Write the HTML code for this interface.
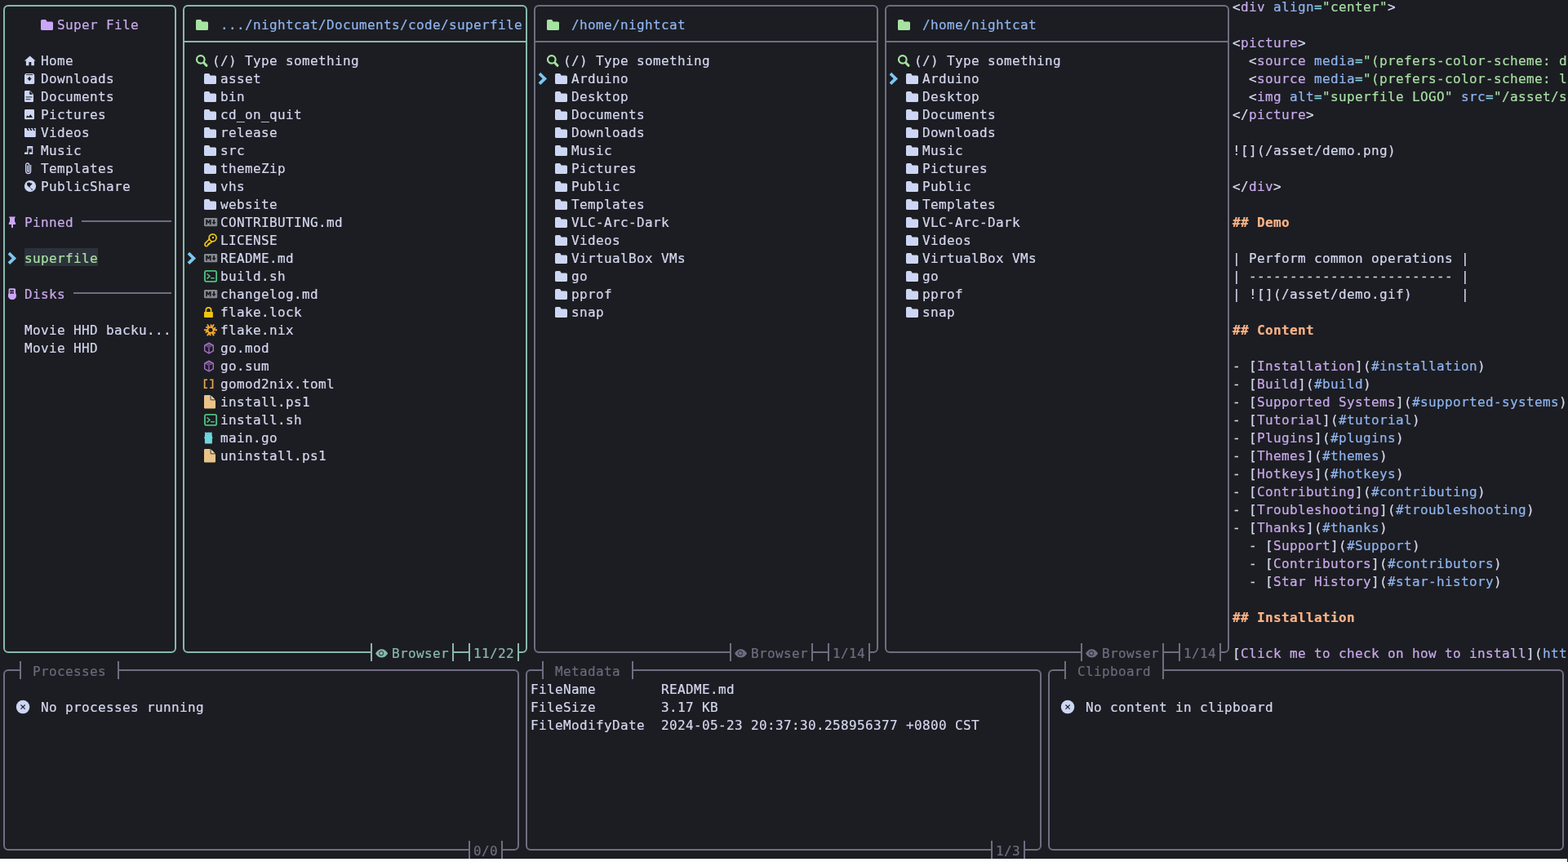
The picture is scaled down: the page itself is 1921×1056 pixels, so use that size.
<!DOCTYPE html>
<html lang="en">
<head>
<meta charset="utf-8">
<title>superfile</title>
<style>
html,body{margin:0;padding:0}
body{width:1921px;height:1056px;background:#1c1d22;overflow:hidden;position:relative}
#scr{position:absolute;left:0;top:0;width:1921px;height:1056px;overflow:hidden;background:#1c1d22;
font-family:"DejaVu Sans Mono","Liberation Mono",monospace;font-size:16px;letter-spacing:0.3672px;line-height:22px;color:#d3d6ee}
#wh{position:absolute;left:0;top:1052px;width:1920px;height:4px;background:#fff}
.t{position:absolute;white-space:pre;height:22px;margin:2.25px 0 0 0;-webkit-text-stroke:0.2px}
#tx{position:absolute;left:0;top:0;width:1921px;height:1056px;transform:translate(0px,-0.35px);will-change:transform}
.bx{position:absolute;box-sizing:border-box;border:2px solid;border-radius:6px}
.ln,.mk,.selbg,.ic{position:absolute}
.ic{overflow:visible}
.mk{background:#1c1d22}
.selbg{background:#2c323a}
.b-act{border-color:#88b8ab} .b-ina{border-color:#6f6d81}
.l-act{background:#88b8ab} .l-ina{background:#6f6d81} .l-div{background:#6f6d81}
.fg{color:#d3d6ee} .act{color:#88b8ab} .ina{color:#6f6d81} .dim{color:#696a7a}
.mauve{color:#c7a9ea} .blue{color:#8fb4ef} .green{color:#a8dfa3}
.peach{color:#fab387} .sky{color:#89dceb} .b{font-weight:bold}
</style>
</head>
<body>
<div id="scr">
<div class="bx b-act" style="left:4px;top:6px;width:212px;height:794px"></div>
<svg class="ic" style="left:50px;top:18px" width="20" height="22" viewBox="0 0 20 22"><path d="M0 7.6Q0 6 1.6 6H5.4Q6.2 6 6.7 6.7L7.6 8.4H13.4Q15 8.4 15 10V17.4Q15 19 13.4 19H1.6Q0 19 0 17.4Z" fill="#cba6f7"/></svg>
<svg class="ic" style="left:30px;top:62px" width="20" height="22" viewBox="0 0 20 22"><path d="M6.7 6.6L13.6 12.6H11.9V18.3H8.3V14H5.4V18.3H1.9V12.6H-0.1Z" fill="#cdd6f4"/></svg>
<svg class="ic" style="left:30px;top:84px" width="20" height="22" viewBox="0 0 20 22"><path d="M1.6 6H10.6L12.2 7.8V17.6Q12.2 19 10.8 19H1.4Q0 19 0 17.6V7.8Z" fill="#cdd6f4"/><path d="M2 7.5H10.2" stroke="#1c1d22" stroke-width="0.9" fill="none"/><path d="M5.1 10.2H7.1V11.8H9L6.1 15.2L3.2 11.8H5.1Z" fill="#1c1d22"/></svg>
<svg class="ic" style="left:30px;top:106px" width="20" height="22" viewBox="0 0 20 22"><path d="M1.3 5H6.6L11 9.4V17.7Q11 19 9.7 19H1.3Q0 19 0 17.7V6.3Q0 5 1.3 5Z" fill="#cdd6f4"/><path d="M6.2 5.6V9.8H10.4Z" fill="#1c1d22"/><path d="M1.6 12.9H9.4M1.6 15.6H7.4" stroke="#1c1d22" stroke-width="1.2" fill="none" opacity="0.75"/></svg>
<svg class="ic" style="left:30px;top:128px" width="20" height="22" viewBox="0 0 20 22"><rect x="0" y="6" width="12" height="12.3" rx="1.4" fill="#cdd6f4"/><path d="M1.8 16L3.7 13.3L5.2 14.9L7.3 12.1L10 16Z" fill="#1c1d22"/></svg>
<svg class="ic" style="left:30px;top:150px" width="20" height="22" viewBox="0 0 20 22"><path d="M0 7H13.8V16.9Q13.8 18 12.7 18H1.1Q0 18 0 16.9Z" fill="#cdd6f4"/><path d="M2.4 7L4 10H5.9L4.3 7ZM6 7L7.6 10H9.5L7.9 7ZM9.6 7L11.2 10H13.1L11.5 7Z" fill="#1c1d22"/></svg>
<svg class="ic" style="left:30px;top:172px" width="20" height="22" viewBox="0 0 20 22"><path d="M3.2 7H10.2V16.6Q10.2 17 9.8 17H6.4Q6 17 6 16.6V15Q6 14.6 6.4 14.6H8.9V10.6H4.5V16.6Q4.5 17 4.1 17H0.4Q0 17 0 16.6V15Q0 14.6 0.4 14.6H3.2Z" fill="#cdd6f4"/><path d="M4.5 9.5H8.9" stroke="#1c1d22" stroke-width="0.7" opacity="0.8"/></svg>
<svg class="ic" style="left:30px;top:194px" width="20" height="22" viewBox="0 0 20 22"><path d="M7.6 8.4V15.6A3 3 0 0 1 1.6 15.6V8A2 2 0 0 1 5.6 8V15.2A1 1 0 0 1 3.6 15.2V9" fill="none" stroke="#cdd6f4" stroke-width="1.3" stroke-linecap="round"/></svg>
<svg class="ic" style="left:30px;top:216px" width="20" height="22" viewBox="0 0 20 22"><circle cx="7" cy="12" r="7.1" fill="#cdd6f4"/><path d="M3 8.6L4.6 7.6L6.6 7.4L7.2 8.4L8.4 8.2L9.6 9L8.4 10.4L7.2 11.6L6.6 13L5.8 13.6L5 12.6L3.6 11.4L3 10Z" fill="#1c1d22"/><path d="M6.4 13.2L9.4 16.2" stroke="#1c1d22" stroke-width="0.7"/><path d="M8.6 16L10 15.4L9.8 16.6L8.8 17.2Z" fill="#1c1d22"/></svg>
<svg class="ic" style="left:10px;top:260px" width="20" height="22" viewBox="0 0 20 22"><path d="M1.2 5.4H8.8V6.8H8V11.6Q8.9 12.4 9.1 13.4V15H6V18.6L5 19.4L4 18.6V15H0.8V13.4Q1.1 12.4 2 11.6V6.8H1.2Z" fill="#cba6f7"/></svg>
<div class="ln l-div" style="left:100px;top:270px;width:110px;height:2px"></div>
<svg class="ic" style="left:10px;top:304px" width="20" height="22" viewBox="0 0 20 22"><path d="M0.9 6.1L7.4 12.4L0.9 18.7" fill="none" stroke="#7ac8f1" stroke-width="3.7" stroke-linejoin="miter" stroke-linecap="butt"/></svg>
<div class="selbg" style="left:30px;top:304px;width:90px;height:22px"></div>
<svg class="ic" style="left:10px;top:348px" width="20" height="22" viewBox="0 0 20 22"><path d="M2 5.2H7.6Q9.1 5.2 9.1 6.7V11.6Q9.9 11.8 9.9 12.8V15.2Q9.9 16.4 9 17.2L7.6 18.6Q7.2 19 6.6 19H3.4Q2.8 19 2.4 18.6L1 17.2Q0 16.4 0 15.2V12.8Q0 11.8 0.6 11.6V6.7Q0.6 5.2 2 5.2Z" fill="#cba6f7"/><rect x="2.1" y="7.3" width="4.8" height="4.4" fill="#1c1d22"/><rect x="2.7" y="8.8" width="1.3" height="1.5" fill="#cba6f7"/><rect x="5" y="8.8" width="1.3" height="1.5" fill="#cba6f7"/></svg>
<div class="ln l-div" style="left:90px;top:358px;width:120px;height:2px"></div>
<div class="bx b-act" style="left:224px;top:6px;width:422px;height:794px"></div>
<div class="ln l-act" style="left:225px;top:50px;width:420px;height:2px"></div>
<svg class="ic" style="left:240px;top:18px" width="20" height="22" viewBox="0 0 20 22"><path d="M0 7.6Q0 6 1.6 6H5.4Q6.2 6 6.7 6.7L7.6 8.4H13.4Q15 8.4 15 10V17.4Q15 19 13.4 19H1.6Q0 19 0 17.4Z" fill="#a6e3a1"/></svg>
<svg class="ic" style="left:240px;top:62px" width="20" height="22" viewBox="0 0 20 22"><circle cx="5.8" cy="10.9" r="4.8" fill="none" stroke="#a6e3a1" stroke-width="2.2"/><path d="M9.6 14.8L12.9 18.3" stroke="#a6e3a1" stroke-width="3.1" stroke-linecap="round"/></svg>
<svg class="ic" style="left:250px;top:84px" width="20" height="22" viewBox="0 0 20 22"><path d="M0 7.6Q0 6 1.6 6H5.4Q6.2 6 6.7 6.7L7.6 8.4H13.4Q15 8.4 15 10V17.4Q15 19 13.4 19H1.6Q0 19 0 17.4Z" fill="#cdd6f4"/></svg>
<svg class="ic" style="left:250px;top:106px" width="20" height="22" viewBox="0 0 20 22"><path d="M0 7.6Q0 6 1.6 6H5.4Q6.2 6 6.7 6.7L7.6 8.4H13.4Q15 8.4 15 10V17.4Q15 19 13.4 19H1.6Q0 19 0 17.4Z" fill="#cdd6f4"/></svg>
<svg class="ic" style="left:250px;top:128px" width="20" height="22" viewBox="0 0 20 22"><path d="M0 7.6Q0 6 1.6 6H5.4Q6.2 6 6.7 6.7L7.6 8.4H13.4Q15 8.4 15 10V17.4Q15 19 13.4 19H1.6Q0 19 0 17.4Z" fill="#cdd6f4"/></svg>
<svg class="ic" style="left:250px;top:150px" width="20" height="22" viewBox="0 0 20 22"><path d="M0 7.6Q0 6 1.6 6H5.4Q6.2 6 6.7 6.7L7.6 8.4H13.4Q15 8.4 15 10V17.4Q15 19 13.4 19H1.6Q0 19 0 17.4Z" fill="#cdd6f4"/></svg>
<svg class="ic" style="left:250px;top:172px" width="20" height="22" viewBox="0 0 20 22"><path d="M0 7.6Q0 6 1.6 6H5.4Q6.2 6 6.7 6.7L7.6 8.4H13.4Q15 8.4 15 10V17.4Q15 19 13.4 19H1.6Q0 19 0 17.4Z" fill="#cdd6f4"/></svg>
<svg class="ic" style="left:250px;top:194px" width="20" height="22" viewBox="0 0 20 22"><path d="M0 7.6Q0 6 1.6 6H5.4Q6.2 6 6.7 6.7L7.6 8.4H13.4Q15 8.4 15 10V17.4Q15 19 13.4 19H1.6Q0 19 0 17.4Z" fill="#cdd6f4"/></svg>
<svg class="ic" style="left:250px;top:216px" width="20" height="22" viewBox="0 0 20 22"><path d="M0 7.6Q0 6 1.6 6H5.4Q6.2 6 6.7 6.7L7.6 8.4H13.4Q15 8.4 15 10V17.4Q15 19 13.4 19H1.6Q0 19 0 17.4Z" fill="#cdd6f4"/></svg>
<svg class="ic" style="left:250px;top:238px" width="20" height="22" viewBox="0 0 20 22"><path d="M0 7.6Q0 6 1.6 6H5.4Q6.2 6 6.7 6.7L7.6 8.4H13.4Q15 8.4 15 10V17.4Q15 19 13.4 19H1.6Q0 19 0 17.4Z" fill="#cdd6f4"/></svg>
<svg class="ic" style="left:250px;top:260px" width="20" height="22" viewBox="0 0 20 22"><rect x="0" y="7" width="16.2" height="10.2" rx="1.2" fill="#84898f"/><path d="M2.2 15.2V9H4L5.4 11.2L6.8 9H8.6V15.2H6.9V11.9L5.4 14L3.9 11.9V15.2Z" fill="#1c1d22"/><path d="M11.2 9H13V12H14.7L12.1 15.3L9.5 12H11.2Z" fill="#1c1d22"/></svg>
<svg class="ic" style="left:250px;top:282px" width="20" height="22" viewBox="0 0 20 22"><circle cx="10.6" cy="9.3" r="4.5" fill="none" stroke="#f1c40f" stroke-width="1.7"/><circle cx="11" cy="9" r="1.2" fill="#f1c40f"/><path d="M6.7 10.7L1.5 15.9Q0.5 17.6 1.5 19.1Q2.8 20.1 4.1 19.1L5 18.2V17.1H6.3V15.9H7.7L9.4 14.1" fill="none" stroke="#f1c40f" stroke-width="1.7" stroke-linejoin="round" stroke-linecap="round"/></svg>
<svg class="ic" style="left:230px;top:304px" width="20" height="22" viewBox="0 0 20 22"><path d="M0.9 6.1L7.4 12.4L0.9 18.7" fill="none" stroke="#7ac8f1" stroke-width="3.7" stroke-linejoin="miter" stroke-linecap="butt"/></svg>
<svg class="ic" style="left:250px;top:304px" width="20" height="22" viewBox="0 0 20 22"><rect x="0" y="7" width="16.2" height="10.2" rx="1.2" fill="#84898f"/><path d="M2.2 15.2V9H4L5.4 11.2L6.8 9H8.6V15.2H6.9V11.9L5.4 14L3.9 11.9V15.2Z" fill="#1c1d22"/><path d="M11.2 9H13V12H14.7L12.1 15.3L9.5 12H11.2Z" fill="#1c1d22"/></svg>
<svg class="ic" style="left:250px;top:326px" width="20" height="22" viewBox="0 0 20 22"><rect x="0.95" y="5.9" width="14.2" height="13" rx="2" fill="none" stroke="#4fbd7e" stroke-width="1.9"/><path d="M3.9 9.7L7 12.4L3.9 15.1" fill="none" stroke="#4fbd7e" stroke-width="1.5" stroke-linecap="round" stroke-linejoin="round"/><path d="M8.6 14.7H12.2" stroke="#4fbd7e" stroke-width="1.5" stroke-linecap="round"/></svg>
<svg class="ic" style="left:250px;top:348px" width="20" height="22" viewBox="0 0 20 22"><rect x="0" y="7" width="16.2" height="10.2" rx="1.2" fill="#84898f"/><path d="M2.2 15.2V9H4L5.4 11.2L6.8 9H8.6V15.2H6.9V11.9L5.4 14L3.9 11.9V15.2Z" fill="#1c1d22"/><path d="M11.2 9H13V12H14.7L12.1 15.3L9.5 12H11.2Z" fill="#1c1d22"/></svg>
<svg class="ic" style="left:250px;top:370px" width="20" height="22" viewBox="0 0 20 22"><rect x="0" y="12" width="10.9" height="7" rx="0.9" fill="#f0c416"/><path d="M2.3 12.4V10.1A3.15 3.15 0 0 1 8.6 10.1V12.4" fill="none" stroke="#f0c416" stroke-width="1.7"/></svg>
<svg class="ic" style="left:250px;top:392px" width="20" height="22" viewBox="0 0 20 22"><g transform="rotate(0 8 12.3)"><path d="M8 12.3L16 12.3M11.7 12.3L13.9 8.9M12 12.3L9.7 8.4" stroke="#f0a830" stroke-width="1.9" fill="none"/></g><g transform="rotate(60 8 12.3)"><path d="M8 12.3L16 12.3M11.7 12.3L13.9 8.9M12 12.3L9.7 8.4" stroke="#f0a830" stroke-width="1.9" fill="none"/></g><g transform="rotate(120 8 12.3)"><path d="M8 12.3L16 12.3M11.7 12.3L13.9 8.9M12 12.3L9.7 8.4" stroke="#f0a830" stroke-width="1.9" fill="none"/></g><g transform="rotate(180 8 12.3)"><path d="M8 12.3L16 12.3M11.7 12.3L13.9 8.9M12 12.3L9.7 8.4" stroke="#f0a830" stroke-width="1.9" fill="none"/></g><g transform="rotate(240 8 12.3)"><path d="M8 12.3L16 12.3M11.7 12.3L13.9 8.9M12 12.3L9.7 8.4" stroke="#f0a830" stroke-width="1.9" fill="none"/></g><g transform="rotate(300 8 12.3)"><path d="M8 12.3L16 12.3M11.7 12.3L13.9 8.9M12 12.3L9.7 8.4" stroke="#f0a830" stroke-width="1.9" fill="none"/></g><circle cx="8" cy="12.3" r="2.5" fill="#1c1d22"/></svg>
<svg class="ic" style="left:250px;top:414px" width="20" height="22" viewBox="0 0 20 22"><path d="M6 6.2L11.3 9.2V15.8L6 18.8L0.7 15.8V9.2Z" fill="none" stroke="#a56ec8" stroke-width="1.4" stroke-linejoin="round"/><path d="M6 6.2L11.3 9.2L6 12.3L0.7 9.2Z" fill="#a56ec8" opacity="0.8"/><path d="M6 12.3V18.8" stroke="#a56ec8" stroke-width="1.3"/><path d="M3 8.9L7.1 11.1M5.2 7.8L9.2 10" stroke="#1c1d22" stroke-width="0.9" opacity="0.85"/></svg>
<svg class="ic" style="left:250px;top:436px" width="20" height="22" viewBox="0 0 20 22"><path d="M6 6.2L11.3 9.2V15.8L6 18.8L0.7 15.8V9.2Z" fill="none" stroke="#a56ec8" stroke-width="1.4" stroke-linejoin="round"/><path d="M6 6.2L11.3 9.2L6 12.3L0.7 9.2Z" fill="#a56ec8" opacity="0.8"/><path d="M6 12.3V18.8" stroke="#a56ec8" stroke-width="1.3"/><path d="M3 8.9L7.1 11.1M5.2 7.8L9.2 10" stroke="#1c1d22" stroke-width="0.9" opacity="0.85"/></svg>
<svg class="ic" style="left:250px;top:458px" width="20" height="22" viewBox="0 0 20 22"><path d="M4 6.4H-0.2V18H4V16.5H1.5V7.9H4ZM7.2 6.4H11.4V18H7.2V16.5H9.7V7.9H7.2Z" fill="#e6a650"/></svg>
<svg class="ic" style="left:250px;top:480px" width="20" height="22" viewBox="0 0 20 22"><path d="M1.2 4H8L14 10V19.3Q14 20.5 12.8 20.5H1.2Q0 20.5 0 19.3V5.2Q0 4 1.2 4Z" fill="#e8c489"/><path d="M8.2 3.6V9.8H14.4" fill="none" stroke="#1c1d22" stroke-width="1"/><path d="M8.7 4.8V9.3H13.2Z" fill="#e3d3ae"/></svg>
<svg class="ic" style="left:250px;top:502px" width="20" height="22" viewBox="0 0 20 22"><rect x="0.95" y="5.9" width="14.2" height="13" rx="2" fill="none" stroke="#4fbd7e" stroke-width="1.9"/><path d="M3.9 9.7L7 12.4L3.9 15.1" fill="none" stroke="#4fbd7e" stroke-width="1.5" stroke-linecap="round" stroke-linejoin="round"/><path d="M8.6 14.7H12.2" stroke="#4fbd7e" stroke-width="1.5" stroke-linecap="round"/></svg>
<svg class="ic" style="left:250px;top:524px" width="20" height="22" viewBox="0 0 20 22"><path d="M1.6 5.6Q2.6 5.2 3.2 6Q5.3 5 7.4 6Q8 5.2 9 5.6Q10.2 6.4 9.4 7.6Q10 9.4 9.9 11.6Q10.9 12 10.4 12.9Q10.2 13.2 9.9 13.1V18.4Q9.9 19.6 8.6 19.6H2.2Q0.9 19.6 0.9 18.4V13.1Q0.4 13.2 0.2 12.9Q-0.2 12 0.8 11.6Q0.7 9.4 1.2 7.6Q0.4 6.4 1.6 5.6Z" fill="#6ed6de"/><path d="M2.6 7.4Q4.4 8.6 6.6 7.4" stroke="#3fa9c0" stroke-width="0.6" fill="none" opacity="0.7"/></svg>
<svg class="ic" style="left:250px;top:546px" width="20" height="22" viewBox="0 0 20 22"><path d="M1.2 4H8L14 10V19.3Q14 20.5 12.8 20.5H1.2Q0 20.5 0 19.3V5.2Q0 4 1.2 4Z" fill="#e8c489"/><path d="M8.2 3.6V9.8H14.4" fill="none" stroke="#1c1d22" stroke-width="1"/><path d="M8.7 4.8V9.3H13.2Z" fill="#e3d3ae"/></svg>
<div class="mk" style="left:456px;top:788px;width:98px;height:22px"></div>
<div class="mk" style="left:576px;top:788px;width:58px;height:22px"></div>
<div class="ln l-act" style="left:454px;top:788px;width:2px;height:22px"></div>
<div class="ln l-act" style="left:554px;top:788px;width:2px;height:22px"></div>
<div class="ln l-act" style="left:574px;top:788px;width:2px;height:22px"></div>
<div class="ln l-act" style="left:634px;top:788px;width:2px;height:22px"></div>
<svg class="ic" style="left:460px;top:788px" width="20" height="22" viewBox="0 0 20 22"><path d="M0 12.4Q3.4 7.2 7.6 7.2T15.2 12.4Q11.8 17.6 7.6 17.6T0 12.4Z" fill="#88b8ab"/><circle cx="7.1" cy="12.3" r="2.6" fill="none" stroke="#1c1d22" stroke-width="0.9"/></svg>
<div class="bx b-ina" style="left:654px;top:6px;width:422px;height:794px"></div>
<div class="ln l-ina" style="left:655px;top:50px;width:420px;height:2px"></div>
<svg class="ic" style="left:670px;top:18px" width="20" height="22" viewBox="0 0 20 22"><path d="M0 7.6Q0 6 1.6 6H5.4Q6.2 6 6.7 6.7L7.6 8.4H13.4Q15 8.4 15 10V17.4Q15 19 13.4 19H1.6Q0 19 0 17.4Z" fill="#a6e3a1"/></svg>
<svg class="ic" style="left:670px;top:62px" width="20" height="22" viewBox="0 0 20 22"><circle cx="5.8" cy="10.9" r="4.8" fill="none" stroke="#a6e3a1" stroke-width="2.2"/><path d="M9.6 14.8L12.9 18.3" stroke="#a6e3a1" stroke-width="3.1" stroke-linecap="round"/></svg>
<svg class="ic" style="left:660px;top:84px" width="20" height="22" viewBox="0 0 20 22"><path d="M0.9 6.1L7.4 12.4L0.9 18.7" fill="none" stroke="#7ac8f1" stroke-width="3.7" stroke-linejoin="miter" stroke-linecap="butt"/></svg>
<svg class="ic" style="left:680px;top:84px" width="20" height="22" viewBox="0 0 20 22"><path d="M0 7.6Q0 6 1.6 6H5.4Q6.2 6 6.7 6.7L7.6 8.4H13.4Q15 8.4 15 10V17.4Q15 19 13.4 19H1.6Q0 19 0 17.4Z" fill="#cdd6f4"/></svg>
<svg class="ic" style="left:680px;top:106px" width="20" height="22" viewBox="0 0 20 22"><path d="M0 7.6Q0 6 1.6 6H5.4Q6.2 6 6.7 6.7L7.6 8.4H13.4Q15 8.4 15 10V17.4Q15 19 13.4 19H1.6Q0 19 0 17.4Z" fill="#cdd6f4"/></svg>
<svg class="ic" style="left:680px;top:128px" width="20" height="22" viewBox="0 0 20 22"><path d="M0 7.6Q0 6 1.6 6H5.4Q6.2 6 6.7 6.7L7.6 8.4H13.4Q15 8.4 15 10V17.4Q15 19 13.4 19H1.6Q0 19 0 17.4Z" fill="#cdd6f4"/></svg>
<svg class="ic" style="left:680px;top:150px" width="20" height="22" viewBox="0 0 20 22"><path d="M0 7.6Q0 6 1.6 6H5.4Q6.2 6 6.7 6.7L7.6 8.4H13.4Q15 8.4 15 10V17.4Q15 19 13.4 19H1.6Q0 19 0 17.4Z" fill="#cdd6f4"/></svg>
<svg class="ic" style="left:680px;top:172px" width="20" height="22" viewBox="0 0 20 22"><path d="M0 7.6Q0 6 1.6 6H5.4Q6.2 6 6.7 6.7L7.6 8.4H13.4Q15 8.4 15 10V17.4Q15 19 13.4 19H1.6Q0 19 0 17.4Z" fill="#cdd6f4"/></svg>
<svg class="ic" style="left:680px;top:194px" width="20" height="22" viewBox="0 0 20 22"><path d="M0 7.6Q0 6 1.6 6H5.4Q6.2 6 6.7 6.7L7.6 8.4H13.4Q15 8.4 15 10V17.4Q15 19 13.4 19H1.6Q0 19 0 17.4Z" fill="#cdd6f4"/></svg>
<svg class="ic" style="left:680px;top:216px" width="20" height="22" viewBox="0 0 20 22"><path d="M0 7.6Q0 6 1.6 6H5.4Q6.2 6 6.7 6.7L7.6 8.4H13.4Q15 8.4 15 10V17.4Q15 19 13.4 19H1.6Q0 19 0 17.4Z" fill="#cdd6f4"/></svg>
<svg class="ic" style="left:680px;top:238px" width="20" height="22" viewBox="0 0 20 22"><path d="M0 7.6Q0 6 1.6 6H5.4Q6.2 6 6.7 6.7L7.6 8.4H13.4Q15 8.4 15 10V17.4Q15 19 13.4 19H1.6Q0 19 0 17.4Z" fill="#cdd6f4"/></svg>
<svg class="ic" style="left:680px;top:260px" width="20" height="22" viewBox="0 0 20 22"><path d="M0 7.6Q0 6 1.6 6H5.4Q6.2 6 6.7 6.7L7.6 8.4H13.4Q15 8.4 15 10V17.4Q15 19 13.4 19H1.6Q0 19 0 17.4Z" fill="#cdd6f4"/></svg>
<svg class="ic" style="left:680px;top:282px" width="20" height="22" viewBox="0 0 20 22"><path d="M0 7.6Q0 6 1.6 6H5.4Q6.2 6 6.7 6.7L7.6 8.4H13.4Q15 8.4 15 10V17.4Q15 19 13.4 19H1.6Q0 19 0 17.4Z" fill="#cdd6f4"/></svg>
<svg class="ic" style="left:680px;top:304px" width="20" height="22" viewBox="0 0 20 22"><path d="M0 7.6Q0 6 1.6 6H5.4Q6.2 6 6.7 6.7L7.6 8.4H13.4Q15 8.4 15 10V17.4Q15 19 13.4 19H1.6Q0 19 0 17.4Z" fill="#cdd6f4"/></svg>
<svg class="ic" style="left:680px;top:326px" width="20" height="22" viewBox="0 0 20 22"><path d="M0 7.6Q0 6 1.6 6H5.4Q6.2 6 6.7 6.7L7.6 8.4H13.4Q15 8.4 15 10V17.4Q15 19 13.4 19H1.6Q0 19 0 17.4Z" fill="#cdd6f4"/></svg>
<svg class="ic" style="left:680px;top:348px" width="20" height="22" viewBox="0 0 20 22"><path d="M0 7.6Q0 6 1.6 6H5.4Q6.2 6 6.7 6.7L7.6 8.4H13.4Q15 8.4 15 10V17.4Q15 19 13.4 19H1.6Q0 19 0 17.4Z" fill="#cdd6f4"/></svg>
<svg class="ic" style="left:680px;top:370px" width="20" height="22" viewBox="0 0 20 22"><path d="M0 7.6Q0 6 1.6 6H5.4Q6.2 6 6.7 6.7L7.6 8.4H13.4Q15 8.4 15 10V17.4Q15 19 13.4 19H1.6Q0 19 0 17.4Z" fill="#cdd6f4"/></svg>
<div class="mk" style="left:896px;top:788px;width:98px;height:22px"></div>
<div class="mk" style="left:1016px;top:788px;width:48px;height:22px"></div>
<div class="ln l-ina" style="left:894px;top:788px;width:2px;height:22px"></div>
<div class="ln l-ina" style="left:994px;top:788px;width:2px;height:22px"></div>
<div class="ln l-ina" style="left:1014px;top:788px;width:2px;height:22px"></div>
<div class="ln l-ina" style="left:1064px;top:788px;width:2px;height:22px"></div>
<svg class="ic" style="left:900px;top:788px" width="20" height="22" viewBox="0 0 20 22"><path d="M0 12.4Q3.4 7.2 7.6 7.2T15.2 12.4Q11.8 17.6 7.6 17.6T0 12.4Z" fill="#6f6d81"/><circle cx="7.1" cy="12.3" r="2.6" fill="none" stroke="#1c1d22" stroke-width="0.9"/></svg>
<div class="bx b-ina" style="left:1084px;top:6px;width:422px;height:794px"></div>
<div class="ln l-ina" style="left:1085px;top:50px;width:420px;height:2px"></div>
<svg class="ic" style="left:1100px;top:18px" width="20" height="22" viewBox="0 0 20 22"><path d="M0 7.6Q0 6 1.6 6H5.4Q6.2 6 6.7 6.7L7.6 8.4H13.4Q15 8.4 15 10V17.4Q15 19 13.4 19H1.6Q0 19 0 17.4Z" fill="#a6e3a1"/></svg>
<svg class="ic" style="left:1100px;top:62px" width="20" height="22" viewBox="0 0 20 22"><circle cx="5.8" cy="10.9" r="4.8" fill="none" stroke="#a6e3a1" stroke-width="2.2"/><path d="M9.6 14.8L12.9 18.3" stroke="#a6e3a1" stroke-width="3.1" stroke-linecap="round"/></svg>
<svg class="ic" style="left:1090px;top:84px" width="20" height="22" viewBox="0 0 20 22"><path d="M0.9 6.1L7.4 12.4L0.9 18.7" fill="none" stroke="#7ac8f1" stroke-width="3.7" stroke-linejoin="miter" stroke-linecap="butt"/></svg>
<svg class="ic" style="left:1110px;top:84px" width="20" height="22" viewBox="0 0 20 22"><path d="M0 7.6Q0 6 1.6 6H5.4Q6.2 6 6.7 6.7L7.6 8.4H13.4Q15 8.4 15 10V17.4Q15 19 13.4 19H1.6Q0 19 0 17.4Z" fill="#cdd6f4"/></svg>
<svg class="ic" style="left:1110px;top:106px" width="20" height="22" viewBox="0 0 20 22"><path d="M0 7.6Q0 6 1.6 6H5.4Q6.2 6 6.7 6.7L7.6 8.4H13.4Q15 8.4 15 10V17.4Q15 19 13.4 19H1.6Q0 19 0 17.4Z" fill="#cdd6f4"/></svg>
<svg class="ic" style="left:1110px;top:128px" width="20" height="22" viewBox="0 0 20 22"><path d="M0 7.6Q0 6 1.6 6H5.4Q6.2 6 6.7 6.7L7.6 8.4H13.4Q15 8.4 15 10V17.4Q15 19 13.4 19H1.6Q0 19 0 17.4Z" fill="#cdd6f4"/></svg>
<svg class="ic" style="left:1110px;top:150px" width="20" height="22" viewBox="0 0 20 22"><path d="M0 7.6Q0 6 1.6 6H5.4Q6.2 6 6.7 6.7L7.6 8.4H13.4Q15 8.4 15 10V17.4Q15 19 13.4 19H1.6Q0 19 0 17.4Z" fill="#cdd6f4"/></svg>
<svg class="ic" style="left:1110px;top:172px" width="20" height="22" viewBox="0 0 20 22"><path d="M0 7.6Q0 6 1.6 6H5.4Q6.2 6 6.7 6.7L7.6 8.4H13.4Q15 8.4 15 10V17.4Q15 19 13.4 19H1.6Q0 19 0 17.4Z" fill="#cdd6f4"/></svg>
<svg class="ic" style="left:1110px;top:194px" width="20" height="22" viewBox="0 0 20 22"><path d="M0 7.6Q0 6 1.6 6H5.4Q6.2 6 6.7 6.7L7.6 8.4H13.4Q15 8.4 15 10V17.4Q15 19 13.4 19H1.6Q0 19 0 17.4Z" fill="#cdd6f4"/></svg>
<svg class="ic" style="left:1110px;top:216px" width="20" height="22" viewBox="0 0 20 22"><path d="M0 7.6Q0 6 1.6 6H5.4Q6.2 6 6.7 6.7L7.6 8.4H13.4Q15 8.4 15 10V17.4Q15 19 13.4 19H1.6Q0 19 0 17.4Z" fill="#cdd6f4"/></svg>
<svg class="ic" style="left:1110px;top:238px" width="20" height="22" viewBox="0 0 20 22"><path d="M0 7.6Q0 6 1.6 6H5.4Q6.2 6 6.7 6.7L7.6 8.4H13.4Q15 8.4 15 10V17.4Q15 19 13.4 19H1.6Q0 19 0 17.4Z" fill="#cdd6f4"/></svg>
<svg class="ic" style="left:1110px;top:260px" width="20" height="22" viewBox="0 0 20 22"><path d="M0 7.6Q0 6 1.6 6H5.4Q6.2 6 6.7 6.7L7.6 8.4H13.4Q15 8.4 15 10V17.4Q15 19 13.4 19H1.6Q0 19 0 17.4Z" fill="#cdd6f4"/></svg>
<svg class="ic" style="left:1110px;top:282px" width="20" height="22" viewBox="0 0 20 22"><path d="M0 7.6Q0 6 1.6 6H5.4Q6.2 6 6.7 6.7L7.6 8.4H13.4Q15 8.4 15 10V17.4Q15 19 13.4 19H1.6Q0 19 0 17.4Z" fill="#cdd6f4"/></svg>
<svg class="ic" style="left:1110px;top:304px" width="20" height="22" viewBox="0 0 20 22"><path d="M0 7.6Q0 6 1.6 6H5.4Q6.2 6 6.7 6.7L7.6 8.4H13.4Q15 8.4 15 10V17.4Q15 19 13.4 19H1.6Q0 19 0 17.4Z" fill="#cdd6f4"/></svg>
<svg class="ic" style="left:1110px;top:326px" width="20" height="22" viewBox="0 0 20 22"><path d="M0 7.6Q0 6 1.6 6H5.4Q6.2 6 6.7 6.7L7.6 8.4H13.4Q15 8.4 15 10V17.4Q15 19 13.4 19H1.6Q0 19 0 17.4Z" fill="#cdd6f4"/></svg>
<svg class="ic" style="left:1110px;top:348px" width="20" height="22" viewBox="0 0 20 22"><path d="M0 7.6Q0 6 1.6 6H5.4Q6.2 6 6.7 6.7L7.6 8.4H13.4Q15 8.4 15 10V17.4Q15 19 13.4 19H1.6Q0 19 0 17.4Z" fill="#cdd6f4"/></svg>
<svg class="ic" style="left:1110px;top:370px" width="20" height="22" viewBox="0 0 20 22"><path d="M0 7.6Q0 6 1.6 6H5.4Q6.2 6 6.7 6.7L7.6 8.4H13.4Q15 8.4 15 10V17.4Q15 19 13.4 19H1.6Q0 19 0 17.4Z" fill="#cdd6f4"/></svg>
<div class="mk" style="left:1326px;top:788px;width:98px;height:22px"></div>
<div class="mk" style="left:1446px;top:788px;width:48px;height:22px"></div>
<div class="ln l-ina" style="left:1324px;top:788px;width:2px;height:22px"></div>
<div class="ln l-ina" style="left:1424px;top:788px;width:2px;height:22px"></div>
<div class="ln l-ina" style="left:1444px;top:788px;width:2px;height:22px"></div>
<div class="ln l-ina" style="left:1494px;top:788px;width:2px;height:22px"></div>
<svg class="ic" style="left:1330px;top:788px" width="20" height="22" viewBox="0 0 20 22"><path d="M0 12.4Q3.4 7.2 7.6 7.2T15.2 12.4Q11.8 17.6 7.6 17.6T0 12.4Z" fill="#6f6d81"/><circle cx="7.1" cy="12.3" r="2.6" fill="none" stroke="#1c1d22" stroke-width="0.9"/></svg>
<div class="bx b-ina" style="left:4px;top:820px;width:632px;height:222px"></div>
<div class="mk" style="left:26px;top:810px;width:118px;height:22px"></div>
<div class="ln l-ina" style="left:24px;top:810px;width:2px;height:22px"></div>
<div class="ln l-ina" style="left:144px;top:810px;width:2px;height:22px"></div>
<div class="mk" style="left:576px;top:1030px;width:38px;height:22px"></div>
<div class="ln l-ina" style="left:574px;top:1030px;width:2px;height:22px"></div>
<div class="ln l-ina" style="left:614px;top:1030px;width:2px;height:22px"></div>
<div class="bx b-ina" style="left:644px;top:820px;width:632px;height:222px"></div>
<div class="mk" style="left:666px;top:810px;width:108px;height:22px"></div>
<div class="ln l-ina" style="left:664px;top:810px;width:2px;height:22px"></div>
<div class="ln l-ina" style="left:774px;top:810px;width:2px;height:22px"></div>
<div class="mk" style="left:1216px;top:1030px;width:38px;height:22px"></div>
<div class="ln l-ina" style="left:1214px;top:1030px;width:2px;height:22px"></div>
<div class="ln l-ina" style="left:1254px;top:1030px;width:2px;height:22px"></div>
<div class="bx b-ina" style="left:1284px;top:820px;width:632px;height:222px"></div>
<div class="mk" style="left:1306px;top:810px;width:118px;height:22px"></div>
<div class="ln l-ina" style="left:1304px;top:810px;width:2px;height:22px"></div>
<div class="ln l-ina" style="left:1424px;top:810px;width:2px;height:22px"></div>
<svg class="ic" style="left:20px;top:854px" width="20" height="22" viewBox="0 0 20 22"><circle cx="8.05" cy="12.1" r="8.25" fill="#cdd6f4"/><path d="M5.5 9.5L10.7 14.7M10.7 9.5L5.5 14.7" stroke="#1c1d22" stroke-width="1.1" stroke-linecap="butt"/></svg>
<svg class="ic" style="left:1300px;top:854px" width="20" height="22" viewBox="0 0 20 22"><circle cx="8.05" cy="12.1" r="8.25" fill="#cdd6f4"/><path d="M5.5 9.5L10.7 14.7M10.7 9.5L5.5 14.7" stroke="#1c1d22" stroke-width="1.1" stroke-linecap="butt"/></svg>
<div id="tx">
<span class="t mauve" style="left:70px;top:18px">Super File</span>
<span class="t fg" style="left:50px;top:62px">Home</span>
<span class="t fg" style="left:50px;top:84px">Downloads</span>
<span class="t fg" style="left:50px;top:106px">Documents</span>
<span class="t fg" style="left:50px;top:128px">Pictures</span>
<span class="t fg" style="left:50px;top:150px">Videos</span>
<span class="t fg" style="left:50px;top:172px">Music</span>
<span class="t fg" style="left:50px;top:194px">Templates</span>
<span class="t fg" style="left:50px;top:216px">PublicShare</span>
<span class="t mauve" style="left:30px;top:260px">Pinned</span>
<span class="t green" style="left:30px;top:304px">superfile</span>
<span class="t mauve" style="left:30px;top:348px">Disks</span>
<span class="t fg" style="left:30px;top:392px">Movie HHD backu...</span>
<span class="t fg" style="left:30px;top:414px">Movie HHD</span>
<span class="t blue" style="left:270px;top:18px">.../nightcat/Documents/code/superfile</span>
<span class="t fg" style="left:260px;top:62px">(/) Type something</span>
<span class="t fg" style="left:270px;top:84px">asset</span>
<span class="t fg" style="left:270px;top:106px">bin</span>
<span class="t fg" style="left:270px;top:128px">cd_on_quit</span>
<span class="t fg" style="left:270px;top:150px">release</span>
<span class="t fg" style="left:270px;top:172px">src</span>
<span class="t fg" style="left:270px;top:194px">themeZip</span>
<span class="t fg" style="left:270px;top:216px">vhs</span>
<span class="t fg" style="left:270px;top:238px">website</span>
<span class="t fg" style="left:270px;top:260px">CONTRIBUTING.md</span>
<span class="t fg" style="left:270px;top:282px">LICENSE</span>
<span class="t fg" style="left:270px;top:304px">README.md</span>
<span class="t fg" style="left:270px;top:326px">build.sh</span>
<span class="t fg" style="left:270px;top:348px">changelog.md</span>
<span class="t fg" style="left:270px;top:370px">flake.lock</span>
<span class="t fg" style="left:270px;top:392px">flake.nix</span>
<span class="t fg" style="left:270px;top:414px">go.mod</span>
<span class="t fg" style="left:270px;top:436px">go.sum</span>
<span class="t fg" style="left:270px;top:458px">gomod2nix.toml</span>
<span class="t fg" style="left:270px;top:480px">install.ps1</span>
<span class="t fg" style="left:270px;top:502px">install.sh</span>
<span class="t fg" style="left:270px;top:524px">main.go</span>
<span class="t fg" style="left:270px;top:546px">uninstall.ps1</span>
<span class="t act" style="left:480px;top:788px">Browser</span>
<span class="t act" style="left:580px;top:788px">11/22</span>
<span class="t blue" style="left:700px;top:18px">/home/nightcat</span>
<span class="t fg" style="left:690px;top:62px">(/) Type something</span>
<span class="t fg" style="left:700px;top:84px">Arduino</span>
<span class="t fg" style="left:700px;top:106px">Desktop</span>
<span class="t fg" style="left:700px;top:128px">Documents</span>
<span class="t fg" style="left:700px;top:150px">Downloads</span>
<span class="t fg" style="left:700px;top:172px">Music</span>
<span class="t fg" style="left:700px;top:194px">Pictures</span>
<span class="t fg" style="left:700px;top:216px">Public</span>
<span class="t fg" style="left:700px;top:238px">Templates</span>
<span class="t fg" style="left:700px;top:260px">VLC-Arc-Dark</span>
<span class="t fg" style="left:700px;top:282px">Videos</span>
<span class="t fg" style="left:700px;top:304px">VirtualBox VMs</span>
<span class="t fg" style="left:700px;top:326px">go</span>
<span class="t fg" style="left:700px;top:348px">pprof</span>
<span class="t fg" style="left:700px;top:370px">snap</span>
<span class="t ina" style="left:920px;top:788px">Browser</span>
<span class="t ina" style="left:1020px;top:788px">1/14</span>
<span class="t blue" style="left:1130px;top:18px">/home/nightcat</span>
<span class="t fg" style="left:1120px;top:62px">(/) Type something</span>
<span class="t fg" style="left:1130px;top:84px">Arduino</span>
<span class="t fg" style="left:1130px;top:106px">Desktop</span>
<span class="t fg" style="left:1130px;top:128px">Documents</span>
<span class="t fg" style="left:1130px;top:150px">Downloads</span>
<span class="t fg" style="left:1130px;top:172px">Music</span>
<span class="t fg" style="left:1130px;top:194px">Pictures</span>
<span class="t fg" style="left:1130px;top:216px">Public</span>
<span class="t fg" style="left:1130px;top:238px">Templates</span>
<span class="t fg" style="left:1130px;top:260px">VLC-Arc-Dark</span>
<span class="t fg" style="left:1130px;top:282px">Videos</span>
<span class="t fg" style="left:1130px;top:304px">VirtualBox VMs</span>
<span class="t fg" style="left:1130px;top:326px">go</span>
<span class="t fg" style="left:1130px;top:348px">pprof</span>
<span class="t fg" style="left:1130px;top:370px">snap</span>
<span class="t ina" style="left:1350px;top:788px">Browser</span>
<span class="t ina" style="left:1450px;top:788px">1/14</span>
<span class="t fg" style="left:1510px;top:-4px">&lt;<span class="mauve">div</span> <span class="blue">align</span><span class="sky">=</span><span class="green">&quot;center&quot;</span>&gt;</span>
<span class="t fg" style="left:1510px;top:40px">&lt;<span class="mauve">picture</span>&gt;</span>
<span class="t fg" style="left:1510px;top:62px">  &lt;<span class="mauve">source</span> <span class="blue">media</span><span class="sky">=</span><span class="green">&quot;(prefers-color-scheme: d</span></span>
<span class="t fg" style="left:1510px;top:84px">  &lt;<span class="mauve">source</span> <span class="blue">media</span><span class="sky">=</span><span class="green">&quot;(prefers-color-scheme: l</span></span>
<span class="t fg" style="left:1510px;top:106px">  &lt;<span class="mauve">img</span> <span class="blue">alt</span><span class="sky">=</span><span class="green">&quot;superfile LOGO&quot;</span> <span class="blue">src</span><span class="sky">=</span><span class="green">&quot;/asset/s</span></span>
<span class="t fg" style="left:1510px;top:128px">&lt;/<span class="mauve">picture</span>&gt;</span>
<span class="t fg" style="left:1510px;top:172px">![](/asset/demo.png)</span>
<span class="t fg" style="left:1510px;top:216px">&lt;/<span class="mauve">div</span>&gt;</span>
<span class="t peach b" style="left:1510px;top:260px">## Demo</span>
<span class="t fg" style="left:1510px;top:304px">| Perform common operations |</span>
<span class="t fg" style="left:1510px;top:326px">| ------------------------- |</span>
<span class="t fg" style="left:1510px;top:348px">| ![](/asset/demo.gif)      |</span>
<span class="t peach b" style="left:1510px;top:392px">## Content</span>
<span class="t fg" style="left:1510px;top:436px">- [<span class="mauve">Installation</span>](<span class="blue">#installation</span>)</span>
<span class="t fg" style="left:1510px;top:458px">- [<span class="mauve">Build</span>](<span class="blue">#build</span>)</span>
<span class="t fg" style="left:1510px;top:480px">- [<span class="mauve">Supported Systems</span>](<span class="blue">#supported-systems</span>)</span>
<span class="t fg" style="left:1510px;top:502px">- [<span class="mauve">Tutorial</span>](<span class="blue">#tutorial</span>)</span>
<span class="t fg" style="left:1510px;top:524px">- [<span class="mauve">Plugins</span>](<span class="blue">#plugins</span>)</span>
<span class="t fg" style="left:1510px;top:546px">- [<span class="mauve">Themes</span>](<span class="blue">#themes</span>)</span>
<span class="t fg" style="left:1510px;top:568px">- [<span class="mauve">Hotkeys</span>](<span class="blue">#hotkeys</span>)</span>
<span class="t fg" style="left:1510px;top:590px">- [<span class="mauve">Contributing</span>](<span class="blue">#contributing</span>)</span>
<span class="t fg" style="left:1510px;top:612px">- [<span class="mauve">Troubleshooting</span>](<span class="blue">#troubleshooting</span>)</span>
<span class="t fg" style="left:1510px;top:634px">- [<span class="mauve">Thanks</span>](<span class="blue">#thanks</span>)</span>
<span class="t fg" style="left:1510px;top:656px">  - [<span class="mauve">Support</span>](<span class="blue">#Support</span>)</span>
<span class="t fg" style="left:1510px;top:678px">  - [<span class="mauve">Contributors</span>](<span class="blue">#contributors</span>)</span>
<span class="t fg" style="left:1510px;top:700px">  - [<span class="mauve">Star History</span>](<span class="blue">#star-history</span>)</span>
<span class="t peach b" style="left:1510px;top:744px">## Installation</span>
<span class="t fg" style="left:1510px;top:788px">[<span class="mauve">Click me to check on how to install</span>](<span class="blue">htt</span></span>
<span class="t dim" style="left:40px;top:810px">Processes</span>
<span class="t ina" style="left:580px;top:1030px">0/0</span>
<span class="t dim" style="left:680px;top:810px">Metadata</span>
<span class="t ina" style="left:1220px;top:1030px">1/3</span>
<span class="t dim" style="left:1320px;top:810px">Clipboard</span>
<span class="t fg" style="left:50px;top:854px">No processes running</span>
<span class="t fg" style="left:1330px;top:854px">No content in clipboard</span>
<span class="t fg" style="left:650px;top:832px">FileName</span>
<span class="t fg" style="left:810px;top:832px">README.md</span>
<span class="t fg" style="left:650px;top:854px">FileSize</span>
<span class="t fg" style="left:810px;top:854px">3.17 KB</span>
<span class="t fg" style="left:650px;top:876px">FileModifyDate</span>
<span class="t fg" style="left:810px;top:876px">2024-05-23 20:37:30.258956377 +0800 CST</span>
</div>
<div id="wh"></div>
</div>
</body>
</html>
